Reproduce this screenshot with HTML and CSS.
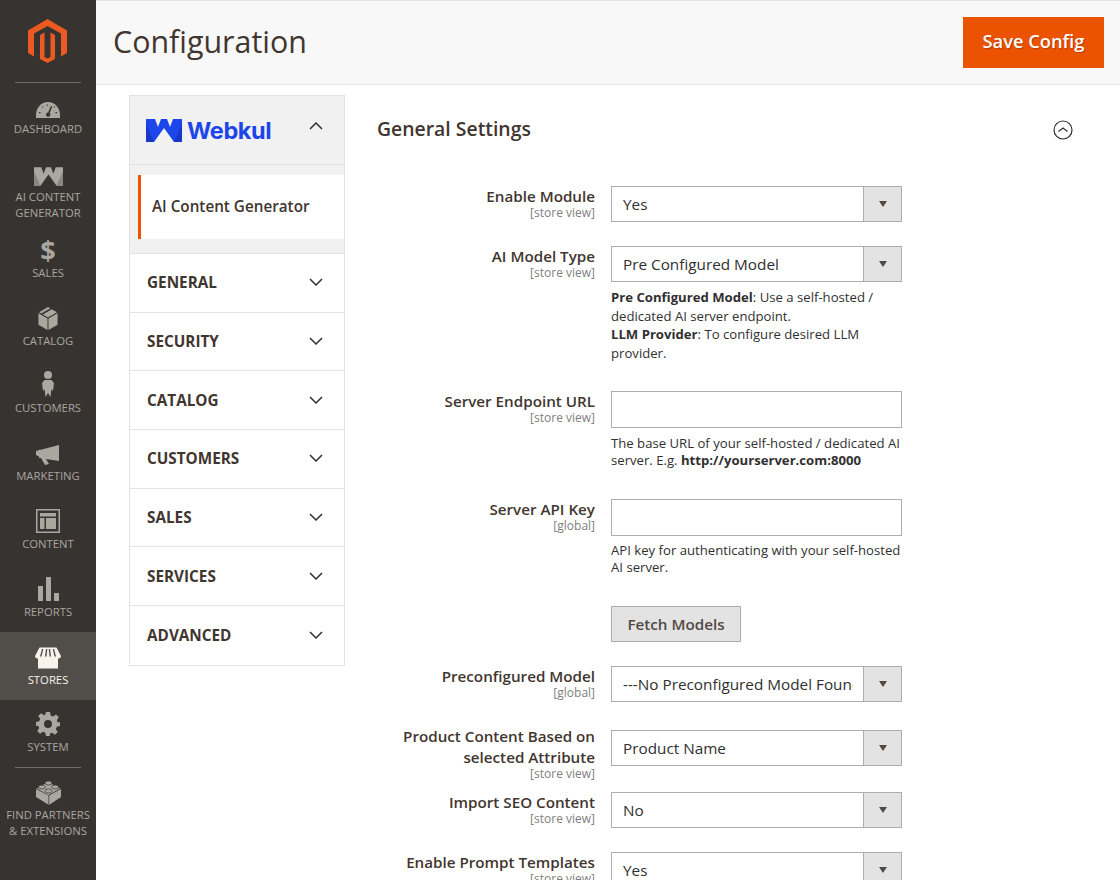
FILE: index.html
```html
<!DOCTYPE html>
<html lang="en">
<head>
    <meta charset="UTF-8">
    <title>Configuration</title>
    <link rel="stylesheet" href="styles.css">
</head>
<body>
    <nav class="menu">
        <div class="menu-logo">
            <svg width="40" height="45" viewBox="29 19 40 45"><path fill="#eb5a20" d="M48.500 19 68 30.500V53l-6 3.500V33.500L48.500 26 35 33.500v23L29 53V30.500Z"/><path fill="#eb5a20" d="M41 35l4.500-2.500V57l3 1.500 3-1.500V32.500L56 35v24l-7.500 4L41 59Z"/></svg>
        </div>
        <a class="menu-item item-first">
            <svg width="24" height="16" viewBox="0 0 24 16"><path fill="#aaa6a0" d="M12 0C5 0 0 6 0 13v3h24v-3C24 6 19 0 12 0Z"/><path fill="#373330" d="M15 4l1.200.5-2.500 6.500a2.200 2.200 0 1 1-1.700-.6ZM3 10h1.500v1.200H3ZM19.500 10H21v1.200h-1.500ZM6 5l.8-.8.8.8-.8.8ZM17.500 5l.8-.8.8.8-.8.8ZM10.500 2.500h1.200v1.300h-1.200Z"/></svg>
            <span>Dashboard</span>
        </a>
        <a class="menu-item item-tall">
            <svg width="29" height="19" viewBox="0 0 36 23"><path fill="#aaa6a0" d="M0 0H9L12 8 15 0H21L24 8 27 0H36V23H28L18 9 8 23H0Z"/><path fill="#8a8681" d="M0 5l8 18H0ZM36 5l-8 18h8Z"/></svg>
            <span>AI Content Generator</span>
        </a>
        <a class="menu-item">
            <span class="menu-dollar">$</span>
            <span>Sales</span>
        </a>
        <a class="menu-item">
            <svg width="20" height="23" viewBox="0 0 20 24"><path fill="#aaa6a0" d="M0 6.500 9.500 12v12L0 18.500ZM20 6.500 10.500 12v12L20 18.500ZM10 0l2.500 1.400-9.500 5.500L.6 5.500ZM14 2.300l5.400 3.200-9.400 5.500-5.500-3.200Z"/></svg>
            <span>Catalog</span>
        </a>
        <a class="menu-item">
            <svg width="12" height="26" viewBox="0 0 12 26"><circle cx="6" cy="4" r="4" fill="#aaa6a0"/><path fill="#aaa6a0" d="M2.500 9h7L12 12l-1 8-1.500-2-1 8L6 22l-2.500 4-1-8L1 20 0 12Z"/></svg>
            <span>Customers</span>
        </a>
        <a class="menu-item">
            <svg width="24" height="20" viewBox="0 0 24 20"><path fill="#aaa6a0" d="M23 0v16L10 14l3 5-4 1-4-7H3V5l1-.500V12L0 10V6Z"/></svg>
            <span>Marketing</span>
        </a>
        <a class="menu-item">
            <svg width="24" height="24" viewBox="0 0 24 24"><path fill="#aaa6a0" d="M0 0h24v24H0Zm1.500 1.500v21h21v-21Z"/><path fill="#aaa6a0" d="M4 4h16v3.500H4ZM4 9h4.500v11H4ZM10 9h10v11H10Z"/></svg>
            <span>Content</span>
        </a>
        <a class="menu-item">
            <svg width="21" height="24" viewBox="0 0 21 24"><path fill="#aaa6a0" d="M0 9h5v15H0ZM8 0h5v24H8ZM16 16h5v8h-5Z"/></svg>
            <span>Reports</span>
        </a>
        <a class="menu-item active">
            <svg width="26" height="22" viewBox="0 0 26 21"><path fill="#f7f3eb" d="M3 10h20v11H3ZM4.500 0h17L26 8.500c0 1.500-1 2.500-2.500 2.500H2.500C1 11 0 10 0 8.500Z"/><path fill="#514d48" d="M7 1.500h1.300L6.500 9H5ZM11 1.500h1.300L11.500 9H10ZM13.800 1.500h1.300L16 9h-1.500ZM17.800 1.500h1.300L21 9h-1.500Z"/></svg>
            <span>Stores</span>
        </a>
        <a class="menu-item">
            <svg width="24" height="24" viewBox="0 0 24 24"><path fill="#aaa6a0" fill-rule="evenodd" d="M10 0h4l.7 3.500 2.300 1 3-2 2.800 2.800-2 3 1 2.300L24 10v4l-3.200.7-1 2.300 2 3-2.800 2.800-3-2-2.300 1L14 24h-4l-.7-3.200-2.300-1-3 2L1.200 19l2-3-1-2.300L0 14v-4l3.200-.7 1-2.300-2-3L5 1.200l3 2 1.300-.7ZM12 8a4 4 0 1 0 0 8 4 4 0 0 0 0-8Z"/></svg>
            <span>System</span>
        </a>
        <a class="menu-item item-partners">
            <svg width="25" height="25" viewBox="0 0 25 25"><path fill="#aaa6a0" d="M0 9 12 2l13 7v8l-12 8-13-8Z"/><path fill="#373330" d="M12.500 15.500V25h.7v-9.500L25 9v-1l-12.500 7L0 8v1Z"/><ellipse cx="12.500" cy="3" rx="3.500" ry="2" fill="#aaa6a0" stroke="#373330" stroke-width=".7"/><ellipse cx="6" cy="7" rx="3.500" ry="2" fill="#aaa6a0" stroke="#373330" stroke-width=".7"/><ellipse cx="19" cy="7" rx="3.500" ry="2" fill="#aaa6a0" stroke="#373330" stroke-width=".7"/><ellipse cx="12.500" cy="11" rx="3.500" ry="2" fill="#aaa6a0" stroke="#373330" stroke-width=".7"/></svg>
            <span>Find Partners &amp; Extensions</span>
        </a>
    </nav>

    <div class="page">
        <header class="page-header">
            <h1 class="page-title">Configuration</h1>
            <button class="save-btn">Save Config</button>
        </header>

        <div class="page-body">
            <aside class="tabs">
                <div class="tab-vendor">
                    <div class="vendor-logo">
                        <svg width="36" height="23" viewBox="0 0 36 23"><path fill="#1d46ea" d="M0 0H9L12 8 15 0H21L24 8 27 0H36V23H28L18 9 8 23H0Z"/><path fill="#1638c8" d="M0 5l8 18H0ZM36 5l-8 18h8Z"/></svg>
                        <span class="vendor-name">Webkul</span>
                    </div>
                    <svg class="chevron" width="14" height="8" viewBox="0 0 14 8"><path fill="none" stroke="#303030" stroke-width="1.500" d="M1 7l6-6 6 6"/></svg>
                </div>
                <div class="tab-sub">
                    <a class="tab-link">AI Content Generator</a>
                </div>
                <div class="tab-row"><span>General</span><svg class="chevron" width="14" height="8" viewBox="0 0 14 8"><path fill="none" stroke="#303030" stroke-width="1.500" d="M1 1l6 6 6-6"/></svg></div>
                <div class="tab-row"><span>Security</span><svg class="chevron" width="14" height="8" viewBox="0 0 14 8"><path fill="none" stroke="#303030" stroke-width="1.500" d="M1 1l6 6 6-6"/></svg></div>
                <div class="tab-row"><span>Catalog</span><svg class="chevron" width="14" height="8" viewBox="0 0 14 8"><path fill="none" stroke="#303030" stroke-width="1.500" d="M1 1l6 6 6-6"/></svg></div>
                <div class="tab-row"><span>Customers</span><svg class="chevron" width="14" height="8" viewBox="0 0 14 8"><path fill="none" stroke="#303030" stroke-width="1.500" d="M1 1l6 6 6-6"/></svg></div>
                <div class="tab-row"><span>Sales</span><svg class="chevron" width="14" height="8" viewBox="0 0 14 8"><path fill="none" stroke="#303030" stroke-width="1.500" d="M1 1l6 6 6-6"/></svg></div>
                <div class="tab-row"><span>Services</span><svg class="chevron" width="14" height="8" viewBox="0 0 14 8"><path fill="none" stroke="#303030" stroke-width="1.500" d="M1 1l6 6 6-6"/></svg></div>
                <div class="tab-row"><span>Advanced</span><svg class="chevron" width="14" height="8" viewBox="0 0 14 8"><path fill="none" stroke="#303030" stroke-width="1.500" d="M1 1l6 6 6-6"/></svg></div>
            </aside>

            <main class="section">
                <div class="section-head">
                    <h2 class="section-title">General Settings</h2>
                    <svg width="20" height="20" viewBox="0 0 20 20"><circle cx="10" cy="10" r="9" fill="none" stroke="#303030" stroke-width="1.200"/><path fill="none" stroke="#303030" stroke-width="1.200" d="M5.500 11.500 10 8l4.500 3.500"/></svg>
                </div>

                <div class="field">
                    <div class="field-label"><label>Enable Module</label><span class="scope">[store view]</span></div>
                    <div class="field-value">
                        <div class="select"><span class="select-text">Yes</span><span class="select-arrow"></span></div>
                    </div>
                </div>
                <div class="field field-note">
                    <div class="field-label"><label>AI Model Type</label><span class="scope">[store view]</span></div>
                    <div class="field-value">
                        <div class="select"><span class="select-text">Pre Configured Model</span><span class="select-arrow"></span></div>
                        <p class="note"><b>Pre Configured Model</b>: Use a self-hosted / dedicated AI server endpoint.<br><b>LLM Provider</b>: To configure desired LLM provider.</p>
                    </div>
                </div>
                <div class="field field-note-short">
                    <div class="field-label"><label>Server Endpoint URL</label><span class="scope">[store view]</span></div>
                    <div class="field-value">
                        <input class="input" type="text">
                        <p class="note note-short">The base URL of your self-hosted / dedicated AI server. E.g. <b>http://yourserver.com:8000</b></p>
                    </div>
                </div>
                <div class="field field-note-short">
                    <div class="field-label"><label>Server API Key</label><span class="scope">[global]</span></div>
                    <div class="field-value">
                        <input class="input" type="text">
                        <p class="note note-short">API key for authenticating with your self-hosted AI server.</p>
                    </div>
                </div>
                <div class="field">
                    <div class="field-label"></div>
                    <div class="field-value"><button class="fetch-btn">Fetch Models</button></div>
                </div>
                <div class="field field-after-single">
                    <div class="field-label"><label>Preconfigured Model</label><span class="scope">[global]</span></div>
                    <div class="field-value">
                        <div class="select"><span class="select-text">---No Preconfigured Model Found---</span><span class="select-arrow"></span></div>
                    </div>
                </div>
                <div class="field field-wrapped">
                    <div class="field-label"><label>Product Content Based on selected Attribute</label><span class="scope">[store view]</span></div>
                    <div class="field-value">
                        <div class="select"><span class="select-text">Product Name</span><span class="select-arrow"></span></div>
                    </div>
                </div>
                <div class="field">
                    <div class="field-label"><label>Import SEO Content</label><span class="scope">[store view]</span></div>
                    <div class="field-value">
                        <div class="select"><span class="select-text">No</span><span class="select-arrow"></span></div>
                    </div>
                </div>
                <div class="field">
                    <div class="field-label"><label>Enable Prompt Templates</label><span class="scope">[store view]</span></div>
                    <div class="field-value">
                        <div class="select"><span class="select-text">Yes</span><span class="select-arrow"></span></div>
                    </div>
                </div>
            </main>
        </div>
    </div>
</body>
</html>
```

FILE: styles.css
```css
* {
    margin: 0;
    padding: 0;
    box-sizing: border-box;
}

body {
    width: 1120px;
    height: 880px;
    font-family: "Open Sans", sans-serif;
    color: #303030;
    background: #fff;
    display: flex;
    overflow: hidden;
}

.menu {
    width: 96px;
    flex-shrink: 0;
    height: 880px;
    background: #373330;
    display: flex;
    flex-direction: column;
}

.menu-logo {
    height: 83px;
    padding-top: 19px;
    display: flex;
    justify-content: center;
    position: relative;
}

.menu-logo::after,
.item-partners::before {
    content: "";
    display: block;
    width: 66px;
    height: 1px;
    background: #736e69;
}

.menu-logo::after {
    position: absolute;
    left: 15px;
    bottom: 0;
}

.menu-item {
    height: 67.800px;
    display: flex;
    flex-direction: column;
    align-items: center;
    justify-content: flex-end;
    padding: 0 2px 12px;
    font-size: 11.300px;
    line-height: 16px;
    color: #aaa6a0;
    text-transform: uppercase;
    text-align: center;
}

.menu-item svg {
    margin-bottom: 3px;
}

.menu-item.item-first {
    height: 58px;
    padding-bottom: 4px;
}

.menu-item.item-tall {
    height: 84px;
    padding-bottom: 4px;
}

.menu-item.active {
    background: #514d48;
    color: #f7f3eb;
}

.menu-dollar {
    font-size: 27px;
    line-height: 24px;
    font-weight: 700;
    margin-bottom: 3px;
}

.menu-item.item-partners {
    height: 80px;
    justify-content: flex-start;
    padding-bottom: 0;
}

.item-partners::before {
    flex-shrink: 0;
    margin-bottom: 12px;
}

.menu-item.item-partners svg {
    margin-bottom: 2px;
}

.page {
    flex: 1;
    min-width: 0;
}

.page-header {
    height: 85px;
    background: #f8f8f8;
    border-top: 1px solid #e3e3e3;
    border-bottom: 1px solid #e3e3e3;
    display: flex;
    align-items: center;
    justify-content: space-between;
    padding: 0 16px 0 17px;
}

.page-title {
    font-size: 30.400px;
    font-weight: 400;
    color: #41362f;
    margin-top: -3px;
}

.save-btn {
    width: 141px;
    height: 51px;
    background: #eb5202;
    border: 1px solid #eb5202;
    color: #fff;
    font-family: inherit;
    font-size: 18.300px;
    font-weight: 600;
    text-shadow: 1px 1px 1px rgba(0,0,0,0.25);
    padding-bottom: 5px;
}

.page-body {
    display: flex;
    padding: 10px 0 0 33px;
    gap: 32px;
}

.tabs {
    width: 216px;
    flex-shrink: 0;
    align-self: flex-start;
    border: 1px solid #e3e3e3;
}

.tab-vendor {
    height: 69px;
    background: #f1f1f1;
    border-bottom: 1px solid #e3e3e3;
    display: flex;
    align-items: center;
    justify-content: space-between;
    padding: 0 21px 0 16px;
}

.tab-vendor .chevron {
    margin-top: -9px;
}

.vendor-logo {
    display: flex;
    align-items: center;
    gap: 5px;
}

.vendor-name {
    font-family: Inter, sans-serif;
    font-size: 23.500px;
    font-weight: 700;
    letter-spacing: -0.4px;
    color: #1d46ea;
}

.tab-sub {
    background: #f1f1f1;
    padding: 10px 0 14px 8px;
    border-bottom: 1px solid #e3e3e3;
}

.tab-link {
    display: flex;
    align-items: center;
    height: 64px;
    background: #fff;
    border-left: 3px solid #eb5202;
    padding: 0 0 3px 11px;
    font-size: 15.250px;
    font-weight: 600;
    color: #41362f;
}

.tab-row {
    height: 58.700px;
    border-bottom: 1px solid #e3e3e3;
    display: flex;
    align-items: center;
    justify-content: space-between;
    padding: 0 21px 1px 17px;
    font-size: 15.300px;
    font-weight: 700;
    text-transform: uppercase;
    color: #41362f;
}

.tab-row:last-child {
    border-bottom: none;
}

.section {
    flex: 1;
    min-width: 0;
}

.section-head {
    display: flex;
    align-items: center;
    justify-content: space-between;
    width: 696px;
    height: 70px;
    margin-bottom: 21px;
}

.section-title {
    font-size: 19.400px;
    font-weight: 600;
    color: #41362f;
    margin-top: -4px;
}

.field {
    display: flex;
    gap: 16px;
    margin-bottom: 24px;
}

.field-note {
    margin-bottom: 29px;
}

.field-note-short {
    margin-bottom: 30px;
}

.field-after-single {
    margin-bottom: 28px;
}

.field-wrapped {
    margin-bottom: 13px;
}

.field-wrapped .field-label {
    margin-top: -4px;
}

.field-label {
    width: 218px;
    flex-shrink: 0;
    text-align: right;
}

.field-label label {
    display: block;
    font-size: 15.200px;
    line-height: 21px;
    font-weight: 600;
    color: #41362f;
}

.scope {
    display: block;
    font-size: 12px;
    line-height: 11px;
    color: #808080;
}

.field-value {
    width: 291px;
    flex-shrink: 0;
}

.select {
    display: flex;
    height: 36px;
    background: #fff;
    border: 1px solid #adadad;
}

.select-text {
    flex: 1;
    min-width: 0;
    overflow: hidden;
    white-space: nowrap;
    margin: 0 10px 0 11px;
    line-height: 35px;
    font-size: 15.300px;
    color: #303030;
}

.select-arrow {
    width: 38px;
    flex-shrink: 0;
    background: #e3e3e3;
    border-left: 1px solid #adadad;
    display: flex;
    align-items: center;
    justify-content: center;
}

.select-arrow::after {
    content: "";
    border-left: 4.500px solid transparent;
    border-right: 4.500px solid transparent;
    border-top: 6px solid #514943;
}

.input {
    display: block;
    width: 100%;
    height: 37px;
    background: #fff;
    border: 1px solid #adadad;
}

.note {
    margin-top: 6px;
    font-size: 13.150px;
    line-height: 18.500px;
    color: #303030;
}

.note-short {
    margin-top: 6.500px;
    line-height: 17px;
}

.fetch-btn {
    display: block;
    width: 130px;
    height: 36px;
    background: #e3e3e3;
    border: 1px solid #adadad;
    font-family: inherit;
    font-size: 15.200px;
    font-weight: 600;
    color: #514943;
}
```
